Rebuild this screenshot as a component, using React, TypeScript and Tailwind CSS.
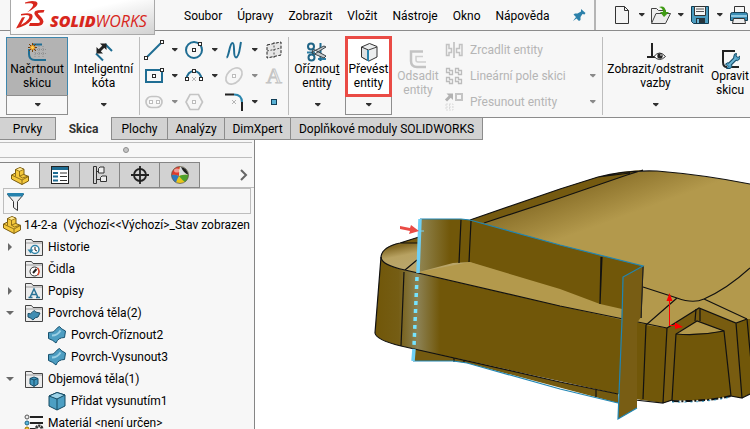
import type { ReactNode } from "react";

type Art = { children: ReactNode; w?: number; h?: number };

function Svg({ children, w = 20, h = 20 }: Art) {
  return (
    <svg width={w} height={h} viewBox={`0 0 ${w} ${h}`} fill="none" aria-hidden="true" className="block shrink-0">
      {children}
    </svg>
  );
}

function Caret({ dim = false }: { dim?: boolean }) {
  return (
    <Svg w={7} h={4}>
      <path d="M1 0h5.500v1L4 3.500 1 1z" fill={dim ? "#8a8a8a" : "#303030"} />
    </Svg>
  );
}

const BLUE = "#1f6d93";

function Handle({ x, y, c = "#2b2b2b" }: { x: number; y: number; c?: string }) {
  return <rect x={x - 1.5} y={y - 1.5} width="3" height="3" fill="#fff" stroke={c} />;
}

/* ---------- sketch tool icons ---------- */
const LineIcon = () => (
  <Svg>
    <path d="M2.500 17.500L17.500 2.500" stroke={BLUE} strokeWidth="2" />
    <Handle x={2} y={18} />
    <Handle x={18} y={2} />
  </Svg>
);
const CircleIcon = () => (
  <Svg>
    <circle cx="10" cy="10" r="8" stroke={BLUE} strokeWidth="2" />
    <Handle x={10} y={10} />
    <Handle x={16} y={4} />
  </Svg>
);
const SplineIcon = () => (
  <Svg>
    <path d="M2.500 17.500C5 17 5.500 3 8.500 3C11.500 3 8.500 17.500 12 17.500C15.500 17.500 16 6 17 2" stroke={BLUE} strokeWidth="2" />
  </Svg>
);
const PlaneIcon = () => (
  <Svg>
    <path d="M3 5L17 2V15L3 18z" fill="#e6e6e6" stroke="#222" strokeDasharray="3 1.500" />
    <path d="M3 11L17 8M10 2V18" stroke="#555" strokeDasharray="2 1.500" />
  </Svg>
);
const RectIcon = () => (
  <Svg>
    <rect x="2" y="4" width="16" height="12" stroke={BLUE} strokeWidth="2" />
    <Handle x={10} y={10} />
    <Handle x={18} y={4} />
  </Svg>
);
const ArcIcon = () => (
  <Svg>
    <path d="M2.500 14C2.500 2 17.500 2 17.500 14" stroke={BLUE} strokeWidth="2" />
    <path d="M8 11l4 4m0-4l-4 4" stroke="#b5b5b5" />
    <Handle x={3} y={13} />
    <Handle x={10} y={5} />
    <Handle x={17} y={13} />
  </Svg>
);
const EllipseIcon = () => (
  <Svg>
    <ellipse cx="10" cy="10" rx="9.500" ry="6.500" transform="rotate(-45 10 10)" stroke="#c9c9c9" strokeWidth="1.700" />
    <Handle x={10} y={10} c="#bdbdbd" />
  </Svg>
);
const SlotIcon = () => (
  <Svg>
    <rect x="2" y="4.500" width="16" height="11" rx="5.500" stroke="#c4c4c4" strokeWidth="1.700" />
    <Handle x={7} y={10} c="#bdbdbd" />
    <Handle x={14} y={10} c="#bdbdbd" />
  </Svg>
);
const HexIcon = () => (
  <Svg>
    <path d="M6 2.500h8.500l4 7.500-4 7.500H6L2 10z" stroke="#c4c4c4" strokeWidth="1.700" />
    <Handle x={10} y={10} c="#bdbdbd" />
  </Svg>
);
const FilletIcon = () => (
  <Svg>
    <path d="M1 2.500h9" stroke="#222" strokeWidth="2" />
    <path d="M10 2.500q8 0 8 8" stroke="#2b86ad" strokeWidth="2" />
    <path d="M18 10v9" stroke="#222" strokeWidth="2" />
    <path d="M8 8l4 4m0-4l-4 4" stroke="#b5b5b5" />
  </Svg>
);
const PointIcon = () => (
  <Svg>
    <rect x="7.500" y="7.500" width="5" height="5" fill="#58b0d4" stroke="#123f57" />
  </Svg>
);
const TextIcon = () => <span className="font-['Liberation_Serif',serif] text-[22px] leading-5 text-[#f2f2f2] [-webkit-text-stroke:1px_#c4c4c4]">A</span>;

/* ---------- large ribbon icons ---------- */
const SketchIcon = () => (
  <Svg>
    <path d="M8 7.500h11M8 11.500h11M8 4v12M12 4v12M16 4v12" stroke="#8f8f8f" strokeDasharray="1 1" />
    <path d="M6 2.500h9M2 7v5q0 6 6 6h11" stroke={BLUE} strokeWidth="2" />
    <path d="M5.500 1v9M1 5.500h9M2 2l7 7m0-7l-7 7" stroke="#74410b" />
    <circle cx="5.500" cy="5.500" r="2" fill="#ffce4f" stroke="#e38a17" />
  </Svg>
);
const DimensionIcon = () => (
  <Svg>
    <path d="M2 11.500l7 7M11 2l7 7" stroke={BLUE} strokeWidth="2" />
    <path d="M5 9l5-5" stroke="#222" strokeWidth="3" />
    <path d="M2.500 11.500V5l6.500 6.500zM12.500 1.500H6L12.500 8z" fill="#222" />
  </Svg>
);
const TrimIcon = () => (
  <Svg>
    <path d="M0 10.500h8M11 17h8" stroke="#2d7fa5" strokeWidth="2" />
    <path d="M13.500 1v18" stroke={BLUE} strokeWidth="2" />
    <path d="M6 7l13 7-2 2L5 11zM6 13L19 5l-2-1L5 10z" fill="#c3c9cc" stroke="#3b444a" />
    <circle cx="4" cy="4.500" r="3" stroke="#1f6486" strokeWidth="2" />
    <circle cx="4.500" cy="15.500" r="3" stroke="#1f6486" strokeWidth="2" />
  </Svg>
);
const ConvertIcon = () => (
  <Svg>
    <path d="M2.500 5l8-3.500 7.500 3v10.500l-8 4-7.500-4z" fill="#eceeef" stroke="#333" strokeLinejoin="round" />
    <path d="M9.500 8l8.500-3" stroke="#444" />
    <path d="M2.500 5l7 3v11l-7-4z" fill="#dde1e3" stroke="#333" />
    <path d="M9 8v11" stroke="#2784ad" strokeWidth="2" />
  </Svg>
);
const OffsetIcon = () => (
  <Svg>
    <path d="M15 2.500H3V12q0 6 6 6h9" stroke="#c3c3c3" strokeWidth="2.500" />
    <path d="M15 7.500H8V11q0 2 2 2h8" stroke="#cfcfcf" strokeWidth="1.500" />
  </Svg>
);
const RelationsIcon = () => (
  <Svg>
    <path d="M6 1v14M1 15h8" stroke="#222" strokeWidth="2" />
    <path d="M8 14.500q5.500-7 11.500 0q-6 6-11.500 0z" fill="#fff" stroke="#333" />
    <circle cx="14" cy="14" r="2.700" fill="#222" />
    <circle cx="15" cy="13" r=".8" fill="#fff" />
  </Svg>
);
const RepairIcon = () => (
  <Svg>
    <path d="M15 2H3v11q0 5 4 5M11 18h8" stroke="#222" strokeWidth="2" />
    <path d="M8 17l8-8" stroke="#174f6b" strokeWidth="4.500" />
    <path d="M14.500 5q-2 4 .5 6t5-1.500V7l-2 1.500-2-1.500.5-2.500z" fill="#4fa0c4" stroke="#174f6b" />
    <path d="M5.500 15q2-2.500 5 0t-.5 4.500H6.500l1.500-2z" fill="#4fa0c4" stroke="#174f6b" />
    <path d="M9 16l7-7" stroke="#6db5d4" strokeWidth="2" />
  </Svg>
);
const MirrorIcon = () => (
  <Svg>
    <path d="M10 2v16" stroke="#bcbcbc" strokeWidth="1.500" />
    <path d="M2.500 4.500v11H5v-3h2.500v-4H5v-4zM18 4.500v11h-2.500v-3h-3v-4h3v-4z" stroke="#c2c2c2" strokeWidth="1.500" />
  </Svg>
);
const PatternIcon = () => (
  <Svg>
    {[[3, 3], [12, 3], [3, 12], [12, 12]].map(([x, y]) => (
      <path key={`${x}-${y}`} d={`M${x} ${y}h3v2h3v4h-3v-2h-3z`} transform="translate(-.5 -.5)" stroke="#bcbcbc" strokeWidth="1.300" />
    ))}
  </Svg>
);
const MoveIcon = () => (
  <Svg>
    <path d="M2 8.500l5-5" stroke="#b2b2b2" strokeWidth="3" />
    <path d="M2.500 1.500H9V8z" fill="#b2b2b2" />
    <rect x="12" y="2" width="6" height="6" stroke="#c4c4c4" strokeWidth="2" />
    <path d="M2 12h7v6H2zM2 15h7M5.500 12v6" stroke="#dcdcdc" strokeDasharray="2 1" />
  </Svg>
);

/* ---------- feature tree icons ---------- */
const PartIcon = () => (
  <Svg>
    <path d="M1.500 9l4-2V3.500l4.500-2 4 1.700v5.300l4.500 2v4.500l-6.500 3.500L1.500 13z" fill="#f4c83c" stroke="#7a5c10" strokeLinejoin="round" />
    <path d="M5.500 3.500l4 1.700v5l3 1.800 6-2M9.500 5.200l4.500-2M1.500 9l10.500 5v4.500M12 14l6.500-3.500M5.500 7v3.500M9.500 10.200l4.500-2" stroke="#7a5c10" strokeWidth=".8" />
    <path d="M6.500 3.500L10 2l3 1.300-3.500 1.400z" fill="#ffea9c" />
  </Svg>
);
function Folder({ children }: { children: ReactNode }) {
  return (
    <Svg>
      <path d="M1.500 18.500v-16h6l1.500 2h9.500v14z" fill="#ececec" stroke="#444" />
      <path d="M2 6h16" stroke="#9d9d9d" />
      {children}
    </Svg>
  );
}
const FolderHistory = () => (
  <Folder>
    <circle cx="11" cy="12.500" r="4" stroke="#2f83a8" strokeWidth="1.500" fill="#fff" />
    <path d="M11 10v3l2 1" stroke="#222" />
    <path d="M3.500 12.500h6l-3 4z" fill="#2f83a8" />
  </Folder>
);
const FolderSensor = () => (
  <Folder>
    <circle cx="10.500" cy="12.500" r="4.500" stroke="#333" fill="#fff" />
    <path d="M13.500 9a5 5 0 010 7" stroke="#df4225" strokeWidth="1.500" />
    <path d="M9 14l3.500-4" stroke="#222" strokeWidth="2" />
  </Folder>
);
const FolderNotes = () => (
  <Folder>
    <path d="M6 16.500L10 8l4 8.500M7.500 13.500h5M4.500 16.500h4M12 16.500h4" stroke="#2a7295" strokeWidth="1.500" />
  </Folder>
);
const FolderSurface = () => (
  <Folder>
    <path d="M4 10.500q3 1 4-1l2-2q1 2 6 2.500l-2 4q-3 0-5 3-2-2-5-3z" fill="#408db2" stroke="#1b4d66" />
  </Folder>
);
const FolderSolid = () => (
  <Folder>
    <path d="M6 9.500l4-1.500 4 1.500v5.500l-4 2.500-4-2.500z" fill="#4296bc" stroke="#164c67" />
    <path d="M6 9.500l4 1.500 4-1.500M10 11v6" stroke="#164c67" />
  </Folder>
);
const SurfaceIcon = () => (
  <Svg>
    <path d="M1.500 7.500Q7 8 9 4.500Q10.500 2 12.500 1.500Q14 4 18.500 6L17.500 12.500Q11 12.500 9 18Q6 15 1.500 13.500z" fill="#4d9dc1" stroke="#16516f" strokeLinejoin="round" />
    <path d="M5 10.500q5.500 0 8.500-5" stroke="#9bd0e5" strokeWidth="2" />
  </Svg>
);
const SolidIcon = () => (
  <Svg>
    <path d="M2 5l8-3.500 8 2.500v11l-8 4-8-4z" fill="#4d9fc3" stroke="#154a63" strokeLinejoin="round" />
    <path d="M2 5l8-3.500 8 2.500-8 4z" fill="#9dd3e8" stroke="#154a63" />
    <path d="M10 8v11" stroke="#154a63" />
  </Svg>
);
const MaterialIcon = () => (
  <Svg>
    <path d="M6 4h13M6 10h13" stroke="#222" strokeWidth="2" />
    <circle cx="3" cy="4" r="2" fill="#eee" stroke="#555" />
    <circle cx="3" cy="10" r="2" fill="#59b6dc" stroke="#1f6484" />
    <circle cx="3" cy="16" r="2" fill="#f4c42c" stroke="#977008" />
    <path d="M6 16h5" stroke="#222" strokeWidth="2" />
    <circle cx="15" cy="16" r="3" stroke="#333" strokeWidth="3" strokeDasharray="2 .6" />
  </Svg>
);

/* ---------- panel tab icons ---------- */
const PropertyIcon = () => (
  <Svg>
    <rect x="1.500" y="1.500" width="17" height="17" fill="#fff" stroke="#222" />
    <path d="M2 3.500h16" stroke={BLUE} strokeWidth="3" />
    <path d="M3 8h5M3 11.500h5M3 15.500h5" stroke={BLUE} strokeWidth="2" />
    <path d="M10 8h7M10 11.500h7M10 15.500h7" stroke="#333" />
  </Svg>
);
const ConfigIcon = () => (
  <Svg>
    <path d="M3.500 1.500h3v17h-3zM6.500 6.500h3M6.500 14.500h4" stroke="#333" />
    <path d="M8.500 3.500l1.500-1.500h4v6h-5.500z" fill="#eee" stroke="#333" />
    <path d="M10.500 12.500l1.500-1.500h4.500v5.500h-6z" fill="#eee" stroke="#333" />
  </Svg>
);
const TargetIcon = () => (
  <Svg>
    <circle cx="10" cy="10" r="6" stroke="#222" strokeWidth="1.800" />
    <path d="M10 1v18M1 10h18" stroke="#222" strokeWidth="1.800" />
  </Svg>
);
const BallIcon = () => (
  <Svg>
    <circle cx="10" cy="10" r="8.500" fill="#e9c51c" />
    <path d="M9 11Q5 9 1.500 10A8.500 8.500 0 0110 1.500Q9 6 9 11z" fill="#df3a2c" />
    <path d="M10 1.500Q9 6 9 11q5-2 9.500-1A8.500 8.500 0 0010 1.500z" fill="#d9dde0" />
    <path d="M11 2q6 .5 7.500 8-5-2-7.500-8z" fill="#202020" />
    <path d="M1.500 10Q5 9 9 11q-2 3-3 6.500A8.500 8.500 0 011.500 10z" fill="#2f79bd" />
    <path d="M18.500 10Q14 9 9 11q3 4 6 6a8.500 8.500 0 003.500-7z" fill="#4ea12c" />
    <circle cx="10" cy="10" r="8.500" stroke="#555" strokeWidth=".7" />
    <ellipse cx="7" cy="5.500" rx="3" ry="2" fill="#fff" opacity=".5" />
  </Svg>
);

/* ---------- building blocks ---------- */
type BigProps = {
  label: [ReactNode, string];
  icon: ReactNode;
  width: string;
  active?: boolean;
  marked?: boolean;
};

function BigButton({ label, icon, width, active, marked }: BigProps) {
  const top = active
    ? "h-[59px] border border-[#3d86ad] bg-[#b3b3b3] pt-1"
    : marked
      ? "relative -mb-px -mt-px h-[61px] border-3 border-[#ea4b45] bg-white pt-[3px]"
      : "h-[59px] border border-transparent pt-1";
  return (
    <div className={`flex shrink-0 flex-col ${width}`}>
      <button className={`flex flex-col items-center whitespace-nowrap ${top}`}>
        {icon}
        <span className="leading-[14px]">{label[0]}</span>
        <span className="leading-[14px]">{label[1]}</span>
      </button>
      <button aria-label={`Možnosti: ${label[1]}`} className={`-mt-px flex h-5 items-center justify-center border ${active || marked ? "border-[#8e8e8e]" : "border-transparent"}`}>
        <Caret />
      </button>
    </div>
  );
}

const Divider = () => <div className="h-[78px] w-px shrink-0 bg-[#bdbdbd]" />;

function Tool({ icon, name, menu, dim }: { icon: ReactNode; name: string; menu?: boolean; dim?: boolean }) {
  return (
    <div className="flex h-[26px] items-center">
      <button aria-label={name} className="flex w-6 justify-center">{icon}</button>
      {menu && (
        <button aria-label={`${name} – možnosti`} className="flex h-5 w-4 items-center justify-center">
          <Caret dim={dim} />
        </button>
      )}
    </div>
  );
}

function DimRow({ icon, text, menu }: { icon: ReactNode; text: string; menu?: boolean }) {
  return (
    <div className="flex h-[26px] items-center">
      <button disabled className="flex flex-1 items-center gap-1.5 whitespace-nowrap text-[#b5b5b5]">
        {icon}
        <span>{text}</span>
      </button>
      {menu && <Caret dim />}
    </div>
  );
}

const menus = ["Soubor", "Úpravy", "Zobrazit", "Vložit", "Nástroje", "Okno", "Nápověda"];

function Logo() {
  return (
    <div className="absolute left-[10px] top-0 flex h-[35px] w-[145px] items-center gap-0.5 border border-t-0 border-[#a9a9a9] bg-linear-to-br from-white from-40% to-[#d2d2d2] text-[#d8261c]">
      <svg width="37" height="34" viewBox="0 0 37 34" fill="none" className="shrink-0" aria-hidden="true">
        <path d="M14 2.500Q20 0 25 1.500Q28 3 25 6.500Q21 10 16 12.500Q21 8 22 5.500Q22.500 3.500 19.500 3.300Q17 3 14 3.500z" fill="#d8261c" />
        <path d="M10 14Q17 12.500 20.500 14Q23 16 20 20.500Q15.500 26 5 28.500L11 17.500L14 17L10 25Q15 22.500 17.500 19Q19.500 16 17 15.300Q15 14.800 10 15.500z" fill="#d8261c" />
        <path d="M33.500 10Q27 9.500 24.500 11Q22 13 25 16.500L28.500 20.500Q29.500 22.500 27.500 23H19L18 26H27Q32 25.500 32.500 21.500Q32.500 19.500 30 17L27 13.800Q26.500 12.800 28.500 12.800L32.500 12.500z" fill="#d8261c" />
      </svg>
      <span className="whitespace-nowrap pt-2 font-['Open_Sans',sans-serif] text-[16px] italic leading-5">
        <b className="font-extrabold">SOLID</b>
        <span>WORKS</span>
      </span>
    </div>
  );
}

function TopBar() {
  return (
    <header className="relative z-10 flex h-[31px] shrink-0 items-center border-b border-[#8c8c8c] pl-[184px] pr-px">
      <Logo />
      <nav className="flex shrink-0 gap-[15px] pt-0.5">
        {menus.map((m) => (
          <button key={m} className="whitespace-nowrap">{m}</button>
        ))}
      </nav>
      <div className="ml-auto flex shrink-0 items-center">
        <button aria-label="Připnout" className="mr-2">
          <Svg w={14} h={14}>
            <path d="M9 1l4.500 4-1 1.500-2-.5-2 3V12l-1.500 1-2.500-2.500L1 13l3-4-2.500-2.500L3 5.500h2.500L9 3.500z" fill="#2c80aa" />
          </Svg>
        </button>
        <div className="mr-4 h-[30px] w-0.5 bg-[#b5b5b5]" />
        <div className="flex items-center gap-1.5">
          <button aria-label="Nový">
            <Svg>
              <path d="M3.500 1.500h9l4 4v13h-13z" fill="#f4f4f4" stroke="#333" />
              <path d="M12.500 1.500v4h4" stroke="#333" />
            </Svg>
          </button>
          <Caret />
          <button aria-label="Otevřít">
            <Svg>
              <path d="M.5 17.500V3.500h5l2 2h7V10" fill="#eee" stroke="#444" />
              <path d="M.5 18.500L5 8.500h14.500l-5 10z" fill="#ececec" stroke="#444" />
              <path d="M8 2q6-2 7 5h3l-5 5-4-5h3q0-4-4-5z" fill="#3f9b14" />
            </Svg>
          </button>
          <Caret />
          <button aria-label="Uložit">
            <Svg>
              <path d="M1.500 1.500h17v17h-15l-2-2z" fill="#4b9cc0" stroke="#123d53" />
              <path d="M4.500 1.500h11v9h-11z" fill="#f5f5f5" stroke="#333" />
              <path d="M6 4h8M6 6.500h8" stroke="#555" />
              <path d="M6 13h9v5H6z" fill="#26353d" />
              <path d="M8 14v4" stroke="#6fb6d6" strokeWidth="2" />
            </Svg>
          </button>
          <Caret />
          <button aria-label="Tisk">
            <Svg>
              <path d="M5.500 8V1.500h10V8" fill="#f5f5f5" stroke="#333" />
              <path d="M1.500 9.500q0-2 2-2h13q2 0 2 2v6h-17z" fill="#3b8eb5" stroke="#123d53" />
              <path d="M2 11h16" stroke="#a9daf0" strokeWidth="1.500" />
              <path d="M4.500 13.500h11l1 5h-13z" fill="#eee" stroke="#333" />
            </Svg>
          </button>
        </div>
      </div>
    </header>
  );
}

function Ribbon() {
  return (
    <section aria-label="Pás karet" className="flex h-[87px] shrink-0 items-start overflow-hidden border-b border-[#8c8c8c] pl-1.5 pt-1.5">
      <BigButton label={["Načrtnout", "skicu"]} icon={<SketchIcon />} width="w-[62px]" active />
      <BigButton label={["Inteligentní", "kóta"]} icon={<DimensionIcon />} width="w-[71px]" />
      <Divider />
      <div className="ml-0.5 grid w-[146px] shrink-0 grid-cols-[40px_40px_40px_24px]">
        <Tool name="Přímka" icon={<LineIcon />} menu />
        <Tool name="Kružnice" icon={<CircleIcon />} menu />
        <Tool name="Splajn" icon={<SplineIcon />} menu />
        <Tool name="Rovina" icon={<PlaneIcon />} />
        <Tool name="Obdélník" icon={<RectIcon />} menu />
        <Tool name="Oblouk" icon={<ArcIcon />} menu />
        <Tool name="Elipsa" icon={<EllipseIcon />} menu dim />
        <Tool name="Text" icon={<TextIcon />} />
        <Tool name="Drážka" icon={<SlotIcon />} menu dim />
        <Tool name="Mnohoúhelník" icon={<HexIcon />} />
        <Tool name="Zaoblení" icon={<FilletIcon />} menu />
        <Tool name="Bod" icon={<PointIcon />} />
      </div>
      <Divider />
      <BigButton label={[<>Oříznou<u>t</u></>, "entity"]} icon={<TrimIcon />} width="w-[56px]" />
      <BigButton label={["Převést", "entity"]} icon={<ConvertIcon />} width="w-[47px]" marked />
      <button disabled className="ml-0.5 flex w-12 shrink-0 flex-col items-center pt-3 text-[#b5b5b5]">
        <OffsetIcon />
        <span className="leading-[14px]">Odsadit</span>
        <span className="leading-[14px]">entity</span>
      </button>
      <div className="ml-0.5 mr-1.5 w-[152px] shrink-0">
        <DimRow icon={<MirrorIcon />} text="Zrcadlit entity" />
        <DimRow icon={<PatternIcon />} text="Lineární pole skici" menu />
        <DimRow icon={<MoveIcon />} text="Přesunout entity" menu />
      </div>
      <Divider />
      <BigButton label={["Zobrazit/odstranit", "vazby"]} icon={<RelationsIcon />} width="w-[105px]" />
      <button className="ml-0.5 flex w-10 shrink-0 flex-col items-center pt-3">
        <RepairIcon />
        <span className="leading-[14px]">Opravit</span>
        <span className="leading-[14px]">skicu</span>
      </button>
    </section>
  );
}

const tabs = [
  { name: "Prvky", w: "w-14" },
  { name: "Skica", w: "w-14" },
  { name: "Plochy", w: "w-14" },
  { name: "Analýzy", w: "w-[57px]" },
  { name: "DimXpert", w: "w-[66px]" },
  { name: "Doplňkové moduly SOLIDWORKS", w: "w-[192px]" },
];

function CommandTabs() {
  return (
    <div role="tablist" className="-mt-px flex h-[23px] shrink-0">
      {tabs.map((t) => (
        <button
          key={t.name}
          role="tab"
          aria-selected={t.name === "Skica"}
          className={`whitespace-nowrap ${t.w} ${t.name === "Skica" ? "border-r border-[#8c8c8c] bg-[#f7f7f7] font-bold text-[#333]" : "border border-l-0 border-[#8c8c8c] bg-[#d2d2d2]"}`}
        >
          {t.name}
        </button>
      ))}
    </div>
  );
}

type Node = { text: string; icon: ReactNode; state?: "open" | "closed"; child?: boolean };
const nodes: Node[] = [
  { text: "Historie", icon: <FolderHistory />, state: "closed" },
  { text: "Čidla", icon: <FolderSensor /> },
  { text: "Popisy", icon: <FolderNotes />, state: "closed" },
  { text: "Povrchová těla(2)", icon: <FolderSurface />, state: "open" },
  { text: "Povrch-Oříznout2", icon: <SurfaceIcon />, child: true },
  { text: "Povrch-Vysunout3", icon: <SurfaceIcon />, child: true },
  { text: "Objemová těla(1)", icon: <FolderSolid />, state: "open" },
  { text: "Přidat vysunutím1", icon: <SolidIcon />, child: true },
  { text: "Materiál <není určen>", icon: <MaterialIcon /> },
];

function Panel() {
  const views = [
    { name: "Strom prvků", icon: <PartIcon /> },
    { name: "Vlastnosti", icon: <PropertyIcon /> },
    { name: "Konfigurace", icon: <ConfigIcon /> },
    { name: "DimXpert", icon: <TargetIcon /> },
    { name: "Vzhledy", icon: <BallIcon /> },
  ];
  return (
    <aside className="flex w-[255px] shrink-0 flex-col overflow-hidden border-r border-[#858585] bg-[#f7f7f7] pt-0.5">
      <div className="mr-0.5 flex h-4 shrink-0 items-center justify-center border-y border-[#bdbdbd]">
        <div className="size-1.5 rounded-full border border-[#8e8e8e] bg-[#c4c4c4]" />
      </div>
      <div className="mt-1 flex h-[26px] shrink-0">
        {views.map((v, i) => (
          <button
            key={v.name}
            aria-label={v.name}
            className={`flex w-10 items-center justify-center border-r border-t border-[#858585] ${i === 0 ? "" : "border-b bg-[#d2d2d2]"}`}
          >
            {v.icon}
          </button>
        ))}
        <button aria-label="Další" className="flex flex-1 items-center justify-end border-b border-[#bdbdbd] pr-1.5">
          <Svg w={8} h={12}>
            <path d="M1 1l5 5-5 5" stroke="#666" strokeWidth="2" />
          </Svg>
        </button>
      </div>
      <label className="mx-[3px] flex h-[26px] shrink-0 items-center border border-[#bdbdbd] pl-0.5">
        <Svg>
          <path d="M1.500 3.500h16l-6 7v9l-4-3v-6z" fill="#eee" stroke="#333" />
          <path d="M1 2h17l-1.500 3.500h-14z" fill="#2682ad" />
        </Svg>
        <input aria-label="Filtr" className="h-full min-w-0 flex-1 bg-transparent px-1 outline-none" />
      </label>
      <ul>
        <li className="flex h-[22px] items-center gap-0.5 whitespace-pre pl-0.5">
          <PartIcon />
          <span>14-2-a  (Výchozí&lt;&lt;Výchozí&gt;_Stav zobrazen</span>
        </li>
        {nodes.map((n) => (
          <li key={n.text} className={`flex h-[22px] items-center whitespace-nowrap ${n.child ? "pl-[29px]" : "pl-1.5"}`}>
            <span className="flex w-[18px] shrink-0">
              {n.state && (
                <button aria-label={`${n.text}: rozbalit`}>
                  <Svg w={8} h={8}>
                    <path d={n.state === "open" ? "M0 2h8L4 6z" : "M2 0l4 4-4 4z"} fill="#6a6a6a" />
                  </Svg>
                </button>
              )}
            </span>
            {n.icon}
            <span className="pl-1">{n.text}</span>
          </li>
        ))}
      </ul>
    </aside>
  );
}

/* ---------- model view ---------- */
function Model() {
  return (
    <svg viewBox="255 140 495 289" preserveAspectRatio="xMinYMin slice" className="block size-full" role="img" aria-label="Model dílu" fill="none">
      <defs>
        <linearGradient id="deck" gradientUnits="userSpaceOnUse" x1="555" y1="188" x2="572" y2="235">
          <stop offset="0" stopColor="#846a24" />
          <stop offset="1" stopColor="#b3994c" />
        </linearGradient>
        <linearGradient id="wall" gradientUnits="userSpaceOnUse" x1="419" y1="0" x2="450" y2="0">
          <stop offset="0" stopColor="#908552" />
          <stop offset="1" stopColor="#715709" />
        </linearGradient>
        <linearGradient id="front" gradientUnits="userSpaceOnUse" x1="376" y1="0" x2="440" y2="0">
          <stop offset="0" stopColor="#715709" />
          <stop offset=".35" stopColor="#755d14" />
          <stop offset=".65" stopColor="#8c8255" />
          <stop offset="1" stopColor="#715709" />
        </linearGradient>
        <linearGradient id="corner" gradientUnits="userSpaceOnUse" x1="398" y1="246" x2="402" y2="266">
          <stop offset="0" stopColor="#826823" />
          <stop offset=".5" stopColor="#b8a262" />
          <stop offset="1" stopColor="#b9a569" />
        </linearGradient>
      </defs>
      {/* upper faces */}
      <path d="M470 220L560 189L598 177Q625 170 657 171Q705 175 750 184V330L667 329L622 320L470 262z" fill="url(#deck)" />
      <path d="M470 220L560 189L598 177Q622 171 643 170L627 175L560 198L484 223z" fill="#755a10" />
      <path d="M381 257Q382 246 400 243L419 237L470 262L622 309L642 325L405 270Q381 265 381 257z" fill="url(#corner)" />
      <path d="M419 272L470 262L560 289L622 309L641 317V326L405 270z" fill="#b3994c" />
      <path d="M400 243L419 237V243z" fill="#755a10" />
      {/* raised wall */}
      <path d="M420 219L461 219L470 220L560 245L643 266L641 317L622 309L600 304L560 289L470 262L453 263L419 272z" fill="url(#wall)" />
      {/* front faces */}
      <path d="M414 348L560 382L618 394V403L467 363L453 361L413 361z" fill="#745a10" />
      <path d="M381 257Q381 265 405 270L560 306L646 325L643 400L618 394L401 346Q376 340 375 333z" fill="url(#front)" />
      <path d="M634 322L667 328L699 308L736 323L747 319H750V394L742 398L731 396Q702 402 672 400L663 403L635 399z" fill="#715709" />
      <path d="M667 328L699 308L736 323L742 398L731 396L724 331L697 321L676 334L672 400L663 403z" fill="#785c10" />
      <path d="M677 298Q693 304 704 299L747 319L736 323L699 308L667 328L646 325z" fill="#b3994c" />
      <path d="M676 334L697 321L724 331Q700 335 676 334z" fill="#b3994c" />
      {/* edges */}
      <g stroke="#111" strokeWidth="1.200">
        <path d="M470 220L560 189L598 177Q625 170 657 171Q705 175 750 184M484 223L560 198L627 175L643 170M598 177L630 173" />
        <path d="M419 237L400 243Q382 247 381 257Q381 265 405 270L560 306L667 328M400 243H419M405 270L417 260" />
        <path d="M381 257L375 333Q376 340 401 346L560 382L618 394M404 272L401 346" />
        <path d="M461 220L459 263M471 221L469 262M602 257L600 304M601 257L600 304M643 266L641 318" />
        <path d="M643 287L677 298Q693 304 704 299Q727 289 750 268M677 298L646 325L643 399M704 299L747 319M747 319L752 372" />
        <path d="M667 328L699 308L736 323L747 319M667 328L663 403L635 400M736 323L742 398L731 396L724 331L697 321L676 334L672 400L663 403M742 398L750 394" />
        <path d="M676 334Q700 336 724 331M696 309L695 321M700 309V321M454 358V362M596 390V397M464 360V363" />
      </g>
      <path d="M672 401Q705 402 731 396" stroke="#111" strokeWidth="2" strokeDasharray="7 2 2 2" />
      <path d="M672 402Q705 403 731 397" stroke="#2492c4" strokeDasharray="2 4" />
      {/* selected surface */}
      <path d="M623 277L643 266L641 317L637 323V408L618 419z" fill="#785d14" />
      <path d="M643 267L641 318" stroke="#222" />
      <path d="M420 219H461L470 220L560 245L643 266L623 277L622 320L618 419L637 408M413 361H453L467 363L560 389L618 403" stroke="#2086b4" strokeWidth="1.200" />
      <path d="M420 219L418 273M414 349L413 361" stroke="#6fd0f5" strokeWidth="3.500" />
      <path d="M417 277L414 346" stroke="#75e3ff" strokeWidth="3.500" strokeDasharray="4 4" />
      <path d="M418 231h6" stroke="#75d4f5" />
      {/* pointer and origin */}
      <path d="M400 226l10 2 1-3 8 6-10 3 1-3-10-2z" fill="#ea4b45" />
      <path d="M669.500 325V299M669 325.500H676" stroke="#f00" />
      <path d="M666.500 301l3-8 3 8zM675 322.500l8 4.500-8 2z" fill="#f00" />
    </svg>
  );
}

export default function App() {
  return (
    <div className="flex h-screen flex-col overflow-hidden bg-white font-['Roboto','Noto_Sans',sans-serif] text-[12px] leading-4 text-black">
      <div className="flex shrink-0 flex-col bg-[#f7f7f7]">
        <TopBar />
        <Ribbon />
      </div>
      <CommandTabs />
      <div className="flex min-h-0 flex-1">
        <Panel />
        <main className="min-w-0 flex-1 bg-white">
          <Model />
        </main>
      </div>
    </div>
  );
}
